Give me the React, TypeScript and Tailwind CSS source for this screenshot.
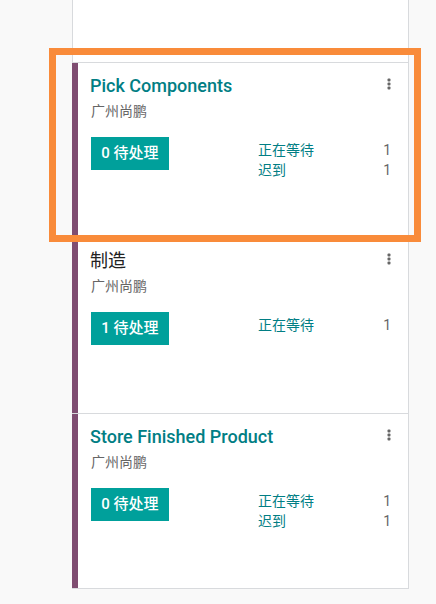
import React from "react";

const FONT = "font-['Roboto','Noto_Sans_CJK_SC',sans-serif]";

function Kebab() {
  return (
    <svg width="4" height="12" viewBox="0 0 4 12" className="mt-[4px]">
      <rect x="0.5" y="0.5" width="3" height="3" rx="1" fill="#666" />
      <rect x="0.5" y="4.5" width="3" height="3" rx="1" fill="#666" />
      <rect x="0.5" y="8.5" width="3" height="3" rx="1" fill="#666" />
    </svg>
  );
}

type Card = {
  title: string;
  link: boolean;
  count: number;
  rows: { label: string; value: number }[];
  h: string;
  last?: boolean;
};

function KCard({ c }: { c: Card }) {
  return (
    <div
      className={`flex border-t border-r border-[#d8dadd] bg-white ${c.h} ${
        c.last ? "border-b" : ""
      }`}
    >
      <div className="w-[6px] shrink-0 bg-[#7f4d71]" />
      <div className="flex-1 pl-[13px] pr-[17px] pt-[11px]">
        <div className="flex items-start justify-between">
          <div
            className={`-ml-px text-[18px] leading-[24px] ${
              c.link ? "font-medium text-[#017e84]" : "text-[#222]"
            }`}
          >
            {c.title}
          </div>
          <Kebab />
        </div>
        <div className="mt-[3px] text-[14px] leading-[20px] text-[#666]">广州尚鹏</div>
        <div className="mt-[16px] flex items-start justify-between">
          <div className="flex h-[33px] w-[78px] items-center justify-center bg-[#00a09b] text-[15px] font-medium text-white">
            {c.count} 待处理
          </div>
          <div className="mt-[3px] w-[133px]">
            {c.rows.map((r) => (
              <div key={r.label} className="flex justify-between text-[14px] leading-[20px]">
                <span className="text-[#017e84]">{r.label}</span>
                <span className="text-[#666]">{r.value}</span>
              </div>
            ))}
          </div>
        </div>
      </div>
    </div>
  );
}

export default function App() {
  const cards: Card[] = [
    {
      title: "Pick Components",
      link: true,
      count: 0,
      rows: [
        { label: "正在等待", value: 1 },
        { label: "迟到", value: 1 },
      ],
      h: "h-[175px]",
    },
    {
      title: "制造",
      link: false,
      count: 1,
      rows: [{ label: "正在等待", value: 1 }],
      h: "h-[176px]",
    },
    {
      title: "Store Finished Product",
      link: true,
      count: 0,
      rows: [
        { label: "正在等待", value: 1 },
        { label: "迟到", value: 1 },
      ],
      h: "h-[176px]",
      last: true,
    },
  ];
  return (
    <div className={`relative h-[604px] w-[436px] overflow-hidden bg-[#f9f9f9] ${FONT}`}>
      <div className="ml-[72px] w-[337px]">
        <div className="h-[62px] border-x border-[#d8dadd] bg-white" />
        {cards.map((c) => (
          <KCard key={c.title} c={c} />
        ))}
      </div>
      <div className="pointer-events-none absolute left-[49px] top-[48px] h-[194px] w-[372px] border-[7px] border-[#f98b3a]" />
    </div>
  );
}
